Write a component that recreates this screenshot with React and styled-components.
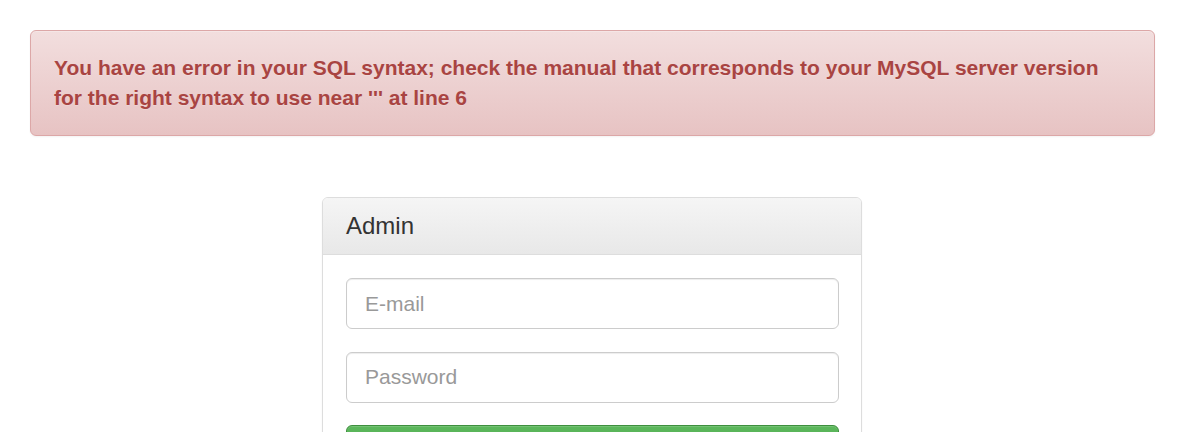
import React from "react";
import styled, { createGlobalStyle } from "styled-components";

const Global = createGlobalStyle`
  html, body { margin: 0; padding: 0; background: #fff; }
  body {
    font-family: "Liberation Sans", Arial, Helvetica, sans-serif;
    font-size: 21px;
    line-height: 30px;
    color: #333;
  }
  * { box-sizing: border-box; }
`;

const Page = styled.div`
  padding: 30px 22px 0 30px;
  display: flex;
  flex-direction: column;
`;

const Alert = styled.div`
  padding: 22px 23px;
  border: 1px solid #dca7a7;
  border-radius: 6px;
  color: #a94442;
  background-image: linear-gradient(to bottom, #f2dede 0%, #e7c3c3 100%);
  box-shadow: inset 0 1px 0 rgba(255, 255, 255, 0.25), 0 1px 2px rgba(0, 0, 0, 0.05);
  text-shadow: 0 1px 0 rgba(255, 255, 255, 0.2);
  font-size: 21px;
  font-weight: bold;
  line-height: 30px;
`;

const Row = styled.div`
  display: flex;
  padding-left: 292px;
  margin-top: 61px;
`;

const Panel = styled.div`
  width: 540px;
  border: 1px solid #ddd;
  border-radius: 6px;
  background: #fff;
  box-shadow: 0 1px 2px rgba(0, 0, 0, 0.05);
`;

const PanelHeading = styled.div`
  padding: 13px 23px 13px;
  height: 57px;
  border-bottom: 1px solid #ddd;
  border-radius: 5px 5px 0 0;
  background-image: linear-gradient(to bottom, #f5f5f5 0%, #e8e8e8 100%);
`;

const PanelTitle = styled.h3`
  margin: 0;
  font-size: 24px;
  font-weight: normal;
  line-height: 29px;
  color: #333;
`;

const PanelBody = styled.form`
  padding: 23px 22px 23px 23px;
  display: flex;
  flex-direction: column;
  gap: 22.5px;
`;

const Input = styled.input`
  display: block;
  width: 100%;
  height: 51px;
  padding: 9px 18px;
  font-family: inherit;
  font-size: 21px;
  color: #555;
  background: #fff;
  border: 1px solid #ccc;
  border-radius: 6px;
  box-shadow: inset 0 1px 1px rgba(0, 0, 0, 0.075);
  outline: none;
  &::placeholder { color: #999; }
`;

const Button = styled.button`
  display: block;
  width: 100%;
  height: 69px;
  font-family: inherit;
  font-size: 27px;
  color: #fff;
  border: 1px solid #3e8f3e;
  border-radius: 6px;
  background-image: linear-gradient(to bottom, #5cb85c 0%, #419641 100%);
  text-shadow: 0 -1px 0 rgba(0, 0, 0, 0.2);
  box-shadow: inset 0 1px 0 rgba(255, 255, 255, 0.15), 0 1px 1px rgba(0, 0, 0, 0.075);
`;

export default function App() {
  return (
    <>
      <Global />
      <Page>
        <Alert>
          You have an error in your SQL syntax; check the manual that corresponds to your MySQL server version for the right syntax to use near ''' at line 6
        </Alert>
        <Row>
          <Panel>
            <PanelHeading>
              <PanelTitle>Admin</PanelTitle>
            </PanelHeading>
            <PanelBody onSubmit={(e) => e.preventDefault()}>
              <Input type="email" placeholder="E-mail" />
              <Input type="password" placeholder="Password" />
              <Button type="submit">Login</Button>
            </PanelBody>
          </Panel>
        </Row>
      </Page>
    </>
  );
}
